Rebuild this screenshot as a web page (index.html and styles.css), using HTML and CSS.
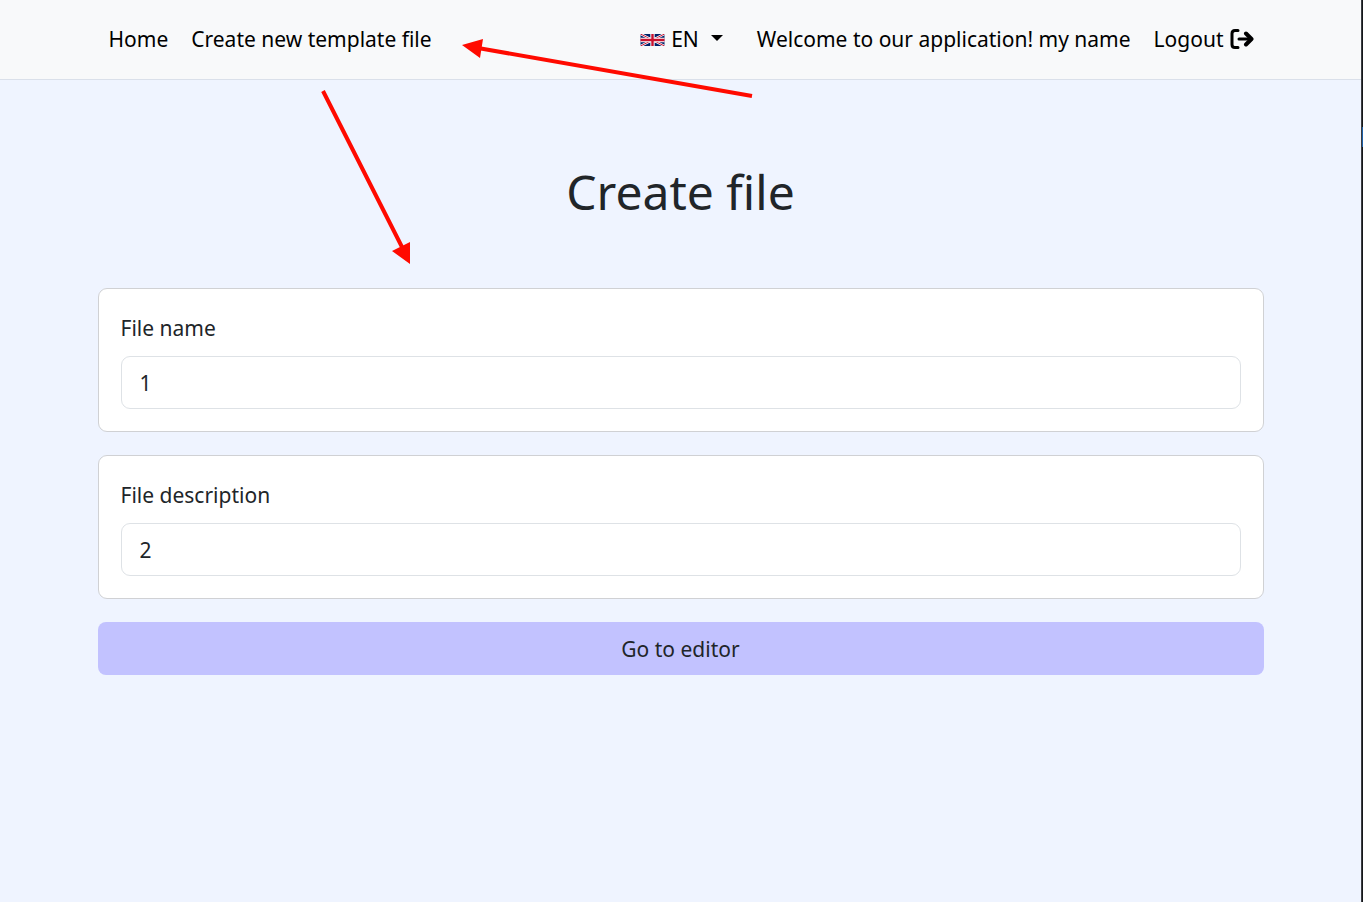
FILE: index.html
```html
<!DOCTYPE html>
<html lang="en">
<head>
<meta charset="utf-8">
<meta name="viewport" content="width=device-width, initial-scale=1">
<title>Create file</title>
<link rel="stylesheet" href="styles.css">
</head>
<body>
<header class="navbar">
  <nav class="container nav">
    <div class="nav-group">
      <a class="nav-link" href="#">Home</a>
      <a class="nav-link" href="#">Create new template file</a>
    </div>
    <div class="nav-group">
      <button class="language" type="button">
        <svg class="flag" viewBox="0 0 50 25" aria-hidden="true">
          <path fill="#012169" d="M0 0h50v25H0z"/>
          <path stroke="#fff" stroke-width="5" d="M0 0l50 25M50 0L0 25"/>
          <path stroke="#c8102e" stroke-width="2" d="M0 0l50 25M50 0L0 25"/>
          <path stroke="#fff" stroke-width="9" d="M25 0v25M0 12.5h50"/>
          <path stroke="#c8102e" stroke-width="5" d="M25 0v25M0 12.5h50"/>
        </svg>
        <span>EN</span>
        <span class="caret"></span>
      </button>
      <span class="welcome">Welcome to our application! my name</span>
      <a class="nav-link logout" href="#">Logout
        <svg class="logout-icon" viewBox="0 0 24 22" aria-hidden="true">
          <path d="M8 2.500H5Q2 2.500 2 5.500v11q0 3 3 3h3M9 11h12"/>
          <path class="logout-tip" d="M16 5.500l5.500 5.500-5.500 5.500"/>
        </svg>
      </a>
    </div>
  </nav>
</header>
<main class="container">
  <h1 class="title">Create file</h1>
  <form class="form">
    <div class="card">
      <label class="label" for="name">File name</label>
      <input class="input" id="name" type="text" value="1">
    </div>
    <div class="card">
      <label class="label" for="description">File description</label>
      <input class="input" id="description" type="text" value="2">
    </div>
    <button class="submit" type="button">Go to editor</button>
  </form>
</main>
<svg class="arrows" width="800" height="280" viewBox="0 0 800 280" aria-hidden="true">
  <path class="shaft" d="M752 96L478 48M323 91l80 158"/>
  <path class="head" d="M462 45l21-6-3 19zM410 264l-18-13 18-9z"/>
</svg>
<div class="edge"></div>
</body>
</html>
```
FILE: styles.css
```css
* {
  box-sizing: border-box;
}

body {
  position: relative;
  min-height: 100vh;
  margin: 0;
  padding-right: 2px;
  background: #eff4ff;
  color: #212529;
  font: 21px/34px "Segoe UI", "Noto Sans", sans-serif;
}

.container {
  width: calc(100% - 40px);
  max-width: 1166px;
  margin: 0 auto;
}

.navbar {
  padding: 22px 0 23px;
  background: #f8f9fa;
  border-bottom: 1px solid #dae0ea;
  color: #000;
}

.nav {
  display: flex;
  justify-content: space-between;
  padding: 0 10px 0 11px;
}

.nav-group {
  display: flex;
  align-items: center;
  gap: 23px;
}

.nav-link {
  color: inherit;
  text-decoration: none;
  white-space: nowrap;
}

.language {
  display: flex;
  align-items: center;
  gap: 6px;
  margin-right: 11px;
  padding: 0;
  border: 0;
  background: none;
  color: inherit;
  font: inherit;
}

.flag {
  width: 25px;
  height: 12px;
  margin-top: 2px;
}

.caret {
  margin: 0 0 2px 6px;
  border: 6px solid transparent;
  border-top-color: #000;
  border-bottom: 0;
}

.welcome {
  white-space: nowrap;
}

.logout {
  display: flex;
  align-items: center;
  gap: 6px;
}

.logout-icon {
  width: 24px;
  height: 22px;
  fill: none;
  stroke: #000;
  stroke-width: 3;
  stroke-linecap: round;
  stroke-linejoin: round;
}

.logout-tip {
  stroke-width: 4;
}

.title {
  margin: 0;
  padding: 82px 0 66px;
  font-size: 48px;
  font-weight: 400;
  line-height: 60px;
  text-align: center;
}

.form {
  display: grid;
  gap: 23px;
}

.card {
  padding: 22px;
  border: 1px solid #d0d1d4;
  border-radius: 9px;
  background: #fff;
}

.label {
  display: block;
  margin-bottom: 11px;
}

.input {
  display: block;
  width: 100%;
  height: 53px;
  padding: 0 18px;
  border: 1px solid #dee2e6;
  border-radius: 9px;
  background: #fff;
  color: inherit;
  font: inherit;
}

.submit {
  height: 53px;
  padding: 0 18px;
  border: 0;
  border-radius: 8px;
  background: #c2c2ff;
  color: inherit;
  font: inherit;
}

.arrows {
  position: absolute;
  top: 0;
  left: 0;
  pointer-events: none;
}

.shaft {
  stroke: #ff0a00;
  stroke-width: 4;
}

.head {
  fill: #ff0a00;
}

.edge {
  position: absolute;
  top: 0;
  right: 0;
  bottom: 0;
  width: 2px;
  border-left: 1px solid #3a3d42;
  background: linear-gradient(#15171a 127px, #1b5fa8 127px, #1b5fa8 147px, #15171a 147px);
}
```
